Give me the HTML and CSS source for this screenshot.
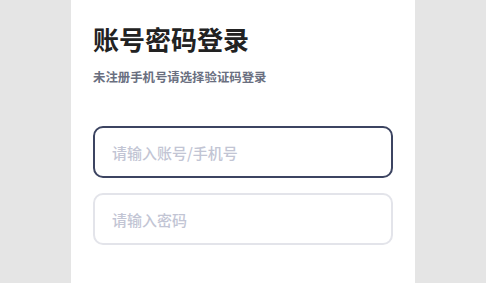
FILE: index.html
```html
<!DOCTYPE html>
<html>
<head>
  <meta charset="UTF-8">
  <title>账号密码登录</title>
  <link rel="stylesheet" href="styles.css">
</head>
<body>
  <div class="login-panel">
    <h1 class="login-title">账号密码登录</h1>
    <p class="login-tip">未注册手机号请选择验证码登录</p>
    <div class="login-form">
      <input type="text" class="login-input active" placeholder="请输入账号/手机号">
      <input type="password" class="login-input" placeholder="请输入密码">
    </div>
  </div>
</body>
</html>
```

FILE: styles.css
```css
html, body {
  height: 100%;
}
body {
  margin: 0;
  background-color: #e5e5e5;
  font-family: "Noto Sans CJK SC", "Noto Sans", sans-serif;
  color: #222;
}
.login-panel {
  width: 344px;
  min-height: 100%;
  margin: 0 auto;
  padding: 22px 22px 0;
  background-color: #fff;
  box-sizing: border-box;
}
.login-title {
  margin: 0;
  font-size: 26px;
  line-height: 34px;
  font-weight: 700;
  color: #222;
}
.login-tip {
  margin: 12px 0 0;
  font-size: 12.4px;
  line-height: 18px;
  font-weight: 600;
  color: #6a6f80;
}
.login-form {
  display: flex;
  flex-direction: column;
  gap: 15px;
  margin-top: 40px;
}
.login-input {
  width: 100%;
  height: 52px;
  padding: 0 17px;
  border: 2px solid #e3e4ea;
  border-radius: 10px;
  box-sizing: border-box;
  font-family: inherit;
  font-size: 15px;
  font-weight: 500;
  color: #222;
  outline: none;
  background: #fff;
}
.login-input.active {
  border-color: #3c4461;
}
.login-input::placeholder {
  color: #c2c5d4;
}
```
